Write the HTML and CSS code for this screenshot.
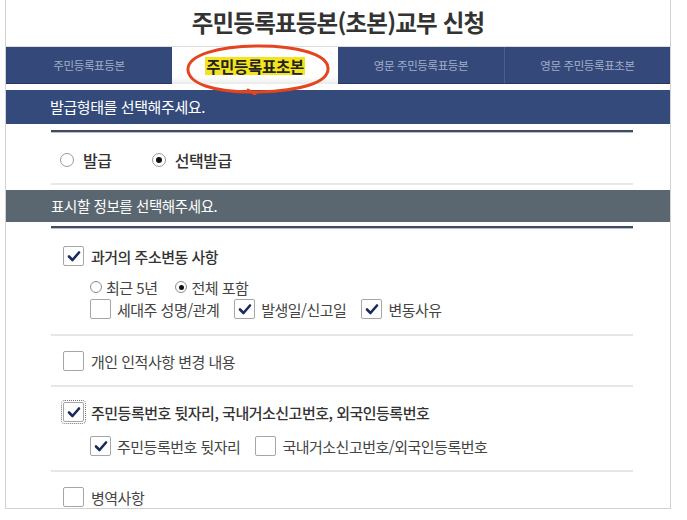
FILE: index.html
```html
<!DOCTYPE html>
<html lang="ko">
<head>
  <meta charset="UTF-8" />
  <meta name="viewport" content="width=device-width, initial-scale=1.0" />
  <title>주민등록표등본(초본)교부 신청</title>
  <link rel="stylesheet" href="styles.css">
</head>
<body>

  <div class="frame">
    <h1 class="page-title">주민등록표등본(초본)교부 신청</h1>

    <div class="tabs">
      <div class="tab">주민등록표등본</div>
      <div class="tab active"><span class="mark">주민등록표초본</span></div>
      <div class="tab">영문 주민등록표등본</div>
      <div class="tab sep">영문 주민등록표초본</div>
      <!-- hand drawn circle around the selected tab -->
      <svg class="scribble" width="146" height="52" viewBox="0 0 146 52">
        <path d="M66 49 C30 49 4 41 3 27 C2 12 34 3 74 3 C112 3 142 11 143 25 C144 40 114 48 74 49 L60 49 M63 47 L70 51"
              fill="none" stroke="#e4451f" stroke-width="3" stroke-linecap="round" />
      </svg>
    </div>

    <div class="bar bar-navy">발급형태를 선택해주세요.</div>
    <div class="panel">
      <div class="rule-dark"></div>
      <div class="issue-row">
        <label class="opt"><span class="radio big"></span>발급</label>
        <label class="opt"><span class="radio big on"></span>선택발급</label>
      </div>
      <div class="rule-light"></div>
    </div>

    <div class="bar bar-gray">표시할 정보를 선택해주세요.</div>
    <div class="panel">
      <div class="rule-dark thin"></div>

      <div class="item first">
        <label class="row main">
          <span class="chk on"><svg viewBox="0 0 16 16"><polyline points="3,8.5 6.5,12 13,4.5" /></svg></span>
          과거의 주소변동 사항
        </label>
        <div class="row sub radios">
          <label class="opt small"><span class="radio"></span>최근 5년</label>
          <label class="opt small"><span class="radio on"></span>전체 포함</label>
        </div>
        <div class="row sub">
          <label class="opt small"><span class="chk"></span>세대주 성명/관계</label>
          <label class="opt small"><span class="chk on"><svg viewBox="0 0 16 16"><polyline points="3,8.5 6.5,12 13,4.5" /></svg></span>발생일/신고일</label>
          <label class="opt small"><span class="chk on"><svg viewBox="0 0 16 16"><polyline points="3,8.5 6.5,12 13,4.5" /></svg></span>변동사유</label>
        </div>
      </div>

      <div class="item">
        <label class="row main light">
          <span class="chk"></span>
          개인 인적사항 변경 내용
        </label>
      </div>

      <div class="item">
        <label class="row main">
          <span class="chk on focus"><svg viewBox="0 0 16 16"><polyline points="3,8.5 6.5,12 13,4.5" /></svg></span>
          주민등록번호 뒷자리, 국내거소신고번호, 외국인등록번호
        </label>
        <div class="row sub gap">
          <label class="opt small"><span class="chk on"><svg viewBox="0 0 16 16"><polyline points="3,8.5 6.5,12 13,4.5" /></svg></span>주민등록번호 뒷자리</label>
          <label class="opt small"><span class="chk"></span>국내거소신고번호/외국인등록번호</label>
        </div>
      </div>

      <div class="item last">
        <label class="row main light">
          <span class="chk"></span>
          병역사항
        </label>
      </div>
    </div>
  </div>

</body>
</html>
```

FILE: styles.css
```css
body {
  margin: 0;
  background-color: #fff;
  font-family: "Noto Sans CJK KR", "Noto Sans", sans-serif;
  color: #333;
}
.frame {
  width: 664px;
  height: 508px;
  margin-left: 5px;
  border: 1px solid #d2d2d2;
  border-top: none;
  overflow: hidden;
}
.page-title {
  margin: 0;
  height: 46px;
  line-height: 44px;
  text-align: center;
  font-size: 23.5px;
  font-weight: bold;
  letter-spacing: -0.8px;
  color: #333;
}

/* Tabs */
.tabs {
  position: relative;
  display: grid;
  grid-template-columns: repeat(4, 1fr);
  height: 37px;
  border-top: 1px solid #dcdcdc;
}
.tab {
  display: flex;
  align-items: center;
  justify-content: center;
  background-color: #34497a;
  border-bottom: 1px solid #26375e;
  color: #a3aec6;
  font-size: 11.5px;
  letter-spacing: -0.4px;
}
.tab.active {
  background-color: #fff;
  border-bottom: none;
  box-shadow: inset 0 -6px 6px -4px rgba(0, 0, 0, 0.12);
}
.tab.sep {
  border-left: 1px solid #4a5f8e;
}
.mark {
  background-color: #f4e41e;
  color: #222;
  font-size: 15.5px;
  font-weight: bold;
  letter-spacing: -0.3px;
  line-height: 18px;
  padding: 0 1px;
}
.scribble {
  position: absolute;
  left: 179px;
  top: -4px;
}

/* Section bars */
.bar {
  color: #fff;
  padding-left: 44px;
  font-size: 15px;
  letter-spacing: -0.4px;
}
.bar-navy {
  margin-top: 6px;
  height: 34px;
  line-height: 34px;
  background-color: #344a7b;
}
.bar-gray {
  margin-top: 5px;
  height: 32px;
  line-height: 32px;
  background-color: #5b6770;
  padding-left: 45px;
  font-size: 14.5px;
}
.panel {
  padding: 0 37px 0 45px;
}
.rule-dark {
  margin-top: 6px;
  height: 2px;
  background-color: #3e4a66;
  border-bottom: 1px solid #b8bfcc;
}
.rule-dark.thin {
  margin-top: 4px;
}
.rule-light {
  height: 2px;
  background-color: #e8e8e8;
}

/* Issue type radios */
.issue-row {
  display: flex;
  align-items: center;
  height: 46px;
  padding-top: 4px;
  padding-left: 9px;
  gap: 40px;
}
.opt {
  display: flex;
  align-items: center;
  gap: 9px;
  font-size: 16px;
  font-weight: 500;
  letter-spacing: -0.4px;
  color: #333;
}
.opt.small {
  font-size: 15px;
  font-weight: normal;
  letter-spacing: -0.5px;
  color: #444;
  gap: 6px;
}

/* Radio and checkbox look */
.radio {
  flex: none;
  width: 10px;
  height: 10px;
  border: 1px solid #8c8c8c;
  border-radius: 50%;
  background-color: #fff;
  display: flex;
  align-items: center;
  justify-content: center;
}
.radio.big {
  width: 12px;
  height: 12px;
  border-color: #999;
}
.radio.on::after {
  content: "";
  width: 5px;
  height: 5px;
  border-radius: 50%;
  background-color: #111;
}
.radio.big.on::after {
  width: 6px;
  height: 6px;
}
.chk {
  flex: none;
  width: 19px;
  height: 18px;
  border: 1px solid #a6a6a6;
  border-radius: 2px;
  background-color: #fff;
  display: flex;
  align-items: center;
  justify-content: center;
}
.chk svg {
  width: 16px;
  height: 16px;
}
.chk svg polyline {
  fill: none;
  stroke: #1b2a5e;
  stroke-width: 2.6;
  stroke-linecap: round;
  stroke-linejoin: round;
}
.chk.focus {
  outline: 1px dotted #777;
  outline-offset: 1px;
}

/* Information items */
.item {
  padding: 14px 0 13px 12px;
  border-bottom: 2px solid #e6e6e6;
}
.item.first {
  padding-top: 16px;
  padding-bottom: 14px;
}
.item.last {
  border-bottom: none;
}
.row {
  display: flex;
  align-items: center;
  height: 22px;
}
.row.main {
  gap: 7px;
  font-size: 15px;
  font-weight: 500;
  letter-spacing: -0.5px;
  color: #333;
}
.row.main.light {
  font-weight: normal;
  color: #444;
}
.row.sub {
  margin-left: 27px;
  gap: 15px;
}
.row.radios {
  margin-top: 9px;
  gap: 18px;
}
.row.radios .opt {
  gap: 4px;
}
.row.sub.gap {
  margin-top: 12px;
}
```
